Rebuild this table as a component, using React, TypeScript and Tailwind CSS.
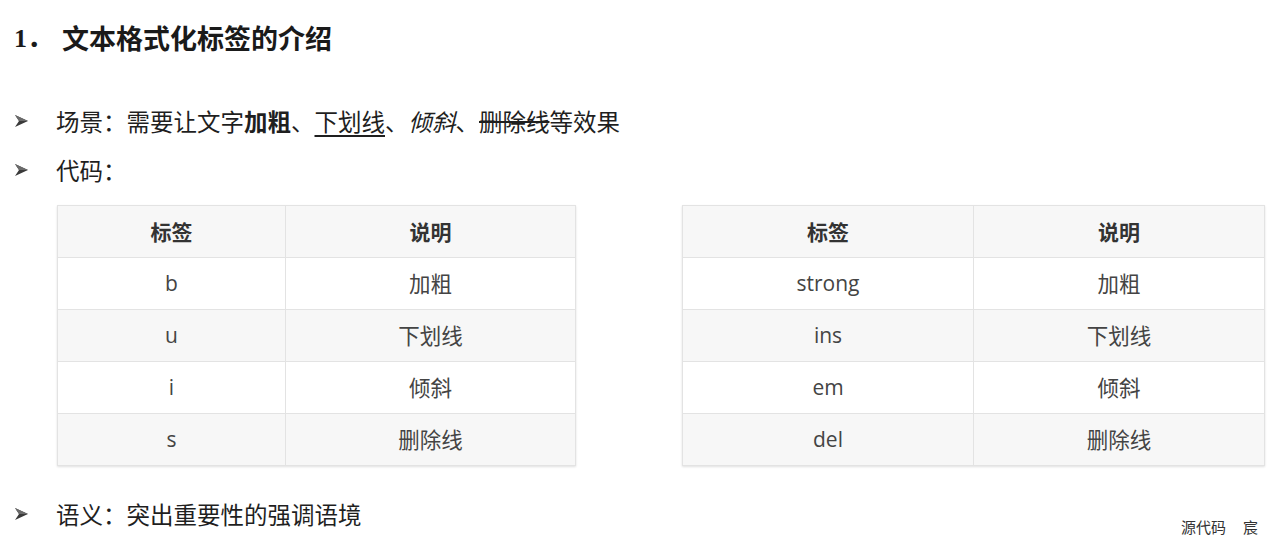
import type { ReactNode } from "react"

const font = { fontFamily: '"Noto Sans CJK SC", "Noto Sans", sans-serif' }

function Arrow() {
  return (
    <svg width="15" height="14" viewBox="0 0 15 14" className="shrink-0">
      <path d="M1 1 L14 7 L1 13 L5 7 Z" fill="#3a3a3a" />
      <path d="M1 1 L14 7 L5 7 Z" fill="#6b6b6b" />
    </svg>
  )
}

function Bullet({ children, className = "" }: { children: ReactNode; className?: string }) {
  return (
    <div className={`flex h-[36px] items-center ${className}`}>
      <div className="flex w-[56px] pl-[14px]">
        <Arrow />
      </div>
      <div className="text-[23.5px] leading-[36px] text-[#1f1f1f]">{children}</div>
    </div>
  )
}

type Row = [string, string]

function TagTable({ rows, first, second }: { rows: Row[]; first: number; second: number }) {
  return (
    <table
      className="border-collapse border border-[#e3e3e3] shadow-[0_1px_2px_rgba(0,0,0,0.12)]"
      style={{ fontFamily: '"Open Sans", "Noto Sans CJK SC", sans-serif' }}
    >
      <thead>
        <tr className="h-[52px] bg-[#f7f7f7]">
          <th className="border border-[#e3e3e3] text-[21px] font-bold text-[#333]" style={{ width: first, ...font }}>
            标签
          </th>
          <th className="border border-[#e3e3e3] text-[21px] font-bold text-[#333]" style={{ width: second, ...font }}>
            说明
          </th>
        </tr>
      </thead>
      <tbody>
        {rows.map(([tag, desc], i) => (
          <tr key={tag} className={i % 2 === 0 ? "h-[52px] bg-white" : "h-[52px] bg-[#f7f7f7]"}>
            <td className="border border-[#e3e3e3] text-center text-[21px] text-[#444]">{tag}</td>
            <td className="border border-[#e3e3e3] text-center text-[21.5px] text-[#444]" style={font}>
              {desc}
            </td>
          </tr>
        ))}
      </tbody>
    </table>
  )
}

export default function App() {
  return (
    <div className="relative h-[545px] w-[1268px] overflow-hidden bg-white" style={font}>
      <div className="mt-[22px] flex h-[32px] items-center pl-[14px] text-[#1a1a1a]">
        <span className="w-[48px] text-[26px] font-bold" style={{ fontFamily: '"Liberation Serif", "Noto Sans CJK SC", serif' }}>
          1．
        </span>
        <span className="text-[27px] font-bold">文本格式化标签的介绍</span>
      </div>

      <Bullet className="mt-[49px]">
        场景：需要让文字<b className="font-bold">加粗</b>、<span className="underline underline-offset-4">下划线</span>、
        <i className="italic">倾斜</i>、<span className="line-through">删除线</span>等效果
      </Bullet>
      <Bullet className="mt-[13px]">代码：</Bullet>

      <div className="mt-[17px] flex gap-[106px] pl-[57px]">
        <TagTable
          first={228}
          second={290}
          rows={[
            ["b", "加粗"],
            ["u", "下划线"],
            ["i", "倾斜"],
            ["s", "删除线"],
          ]}
        />
        <TagTable
          first={291}
          second={291}
          rows={[
            ["strong", "加粗"],
            ["ins", "下划线"],
            ["em", "倾斜"],
            ["del", "删除线"],
          ]}
        />
      </div>

      <Bullet className="mt-[30px]">语义：突出重要性的强调语境</Bullet>

      <div className="absolute bottom-[7px] right-[10px] text-[15px] text-[#333]">
        源代码<span className="ml-[17px]">宸</span>
      </div>
    </div>
  )
}
